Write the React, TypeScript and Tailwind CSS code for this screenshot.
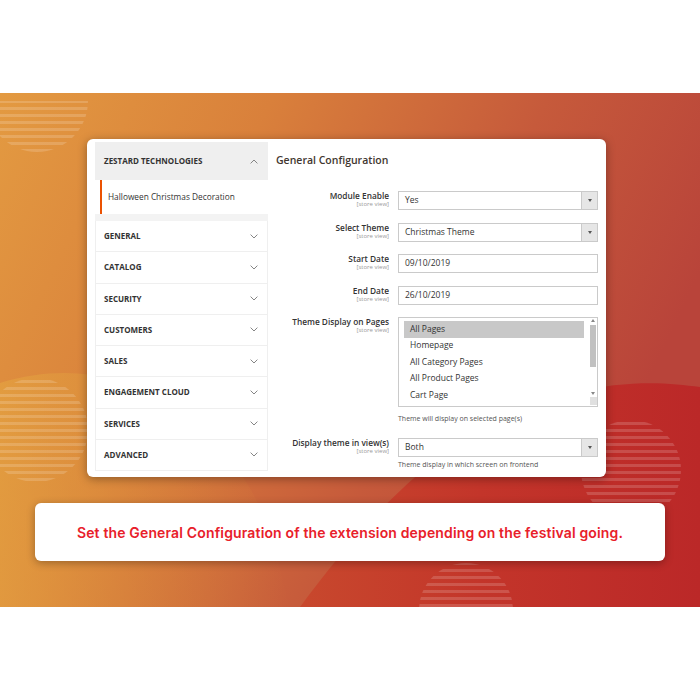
import React from 'react';

const sections = ['GENERAL', 'CATALOG', 'SECURITY', 'CUSTOMERS', 'SALES', 'ENGAGEMENT CLOUD', 'SERVICES', 'ADVANCED'];
const pages = ['All Pages', 'Homepage', 'All Category Pages', 'All Product Pages', 'Cart Page'];

const Chevron = ({ up = false }: { up?: boolean }) => (
  <svg width="8" height="5" viewBox="0 0 8 5" className="text-[#777]">
    <path d={up ? 'M0.6 4.4 L4 1 L7.4 4.4' : 'M0.6 0.6 L4 4 L7.4 0.6'} fill="none" stroke="currentColor" strokeWidth="0.9" />
  </svg>
);

const Label = ({ text }: { text: string }) => (
  <div className="w-[113px] shrink-0 pt-[1px] text-right leading-none">
    <div className="text-[8.3px] font-semibold text-[#333]">{text}</div>
    <div className="mt-[1px] text-[6px] text-[#9a9a9a]">[store view]</div>
  </div>
);

const SelectField = ({ value }: { value: string }) => (
  <div className="flex h-[19px] w-[200px] border border-[#cacaca] bg-white">
    <div className="flex flex-1 items-center pl-[6px] text-[8.5px] text-[#333]">{value}</div>
    <div className="flex w-[16px] items-center justify-center border-l border-[#cacaca] bg-[#e6e6e6]">
      <svg width="4" height="3" viewBox="0 0 4 3">
        <path d="M0 0 H4 L2 3 Z" fill="#555" />
      </svg>
    </div>
  </div>
);

const TextField = ({ value }: { value: string }) => (
  <div className="flex h-[19px] w-[200px] items-center border border-[#cacaca] bg-white pl-[6px] text-[8.5px] text-[#333]">
    {value}
  </div>
);

const Background = () => (
  <svg className="absolute inset-0" width="700" height="514" viewBox="0 0 700 514">
    <defs>
      <linearGradient id="base" x1="0" y1="0" x2="1" y2="0.35">
        <stop offset="0" stopColor="#e39a41" />
        <stop offset="0.35" stopColor="#d9803b" />
        <stop offset="0.7" stopColor="#c65a3b" />
        <stop offset="1" stopColor="#b9443a" />
      </linearGradient>
      <linearGradient id="red" x1="0" y1="0" x2="1" y2="0">
        <stop offset="0" stopColor="#c8482d" />
        <stop offset="0.45" stopColor="#c3352a" />
        <stop offset="1" stopColor="#bb2828" />
      </linearGradient>
      <linearGradient id="warm" x1="0" y1="0" x2="1" y2="0">
        <stop offset="0" stopColor="#e4a240" />
        <stop offset="1" stopColor="#d98a3a" stopOpacity="0" />
      </linearGradient>
      <pattern id="stripes" width="10" height="7" patternUnits="userSpaceOnUse">
        <rect width="10" height="3" fill="#ffffff" fillOpacity="0.16" />
      </pattern>
    </defs>
    <rect width="700" height="514" fill="url(#base)" />
    <path d="M0 290 C100 260 180 300 240 380 C270 420 280 480 290 514 L0 514 Z" fill="url(#warm)" opacity="0.7" />
    <path d="M300 514 C370 420 450 330 570 300 C630 286 670 290 700 294 L700 514 Z" fill="url(#red)" />
    <path d="M0 8 H88 A51 51 0 0 1 -14 8 Z" fill="url(#stripes)" />
    <circle cx="36" cy="337" r="52" fill="url(#stripes)" />
    <circle cx="631" cy="377" r="50" fill="url(#stripes)" />
    <circle cx="466" cy="517" r="47" fill="url(#stripes)" />
  </svg>
);

export default function App() {
  return (
    <div className="flex h-[700px] w-[700px] flex-col bg-white [font-family:'Open_Sans',sans-serif]">
      <div className="h-[93px]" />
      <div className="relative h-[514px] overflow-hidden">
        <Background />
        <div className="relative flex flex-col pt-[46px]">
          <div className="ml-[87px] flex h-[338px] w-[519px] rounded-md bg-white shadow-[0_2px_10px_rgba(0,0,0,0.35)]">
            <div className="ml-[8px] mt-[3px] flex w-[173px] flex-col">
              <div className="flex h-[38px] items-center justify-between bg-[#efefef] pl-[9px] pr-[10px]">
                <span className="text-[8px] font-bold text-[#333]">ZESTARD TECHNOLOGIES</span>
                <Chevron up />
              </div>
              <div className="flex h-[34px] bg-white pl-[5px]">
                <div className="flex flex-1 items-center border-l-2 border-[#eb5202] pl-[6px] text-[8.3px] text-[#333]">
                  Halloween Christmas Decoration
                </div>
              </div>
              <div className="h-[7px] bg-[#f3f3f3]" />
              {sections.map((s) => (
                <div
                  key={s}
                  className="flex h-[31.25px] items-center justify-between border-x border-b border-[#efefef] pl-[8px] pr-[9px]"
                >
                  <span className="text-[8px] font-bold text-[#333]">{s}</span>
                  <Chevron />
                </div>
              ))}
            </div>
            <div className="ml-[8px] flex flex-col pt-[14px]">
              <div className="text-[10.5px] font-semibold leading-[14px] text-[#41362f]">General Configuration</div>
              <div className="mt-[24px] flex flex-col gap-[12.5px]">
                <div className="flex gap-[9px]">
                  <Label text="Module Enable" />
                  <SelectField value="Yes" />
                </div>
                <div className="flex gap-[9px]">
                  <Label text="Select Theme" />
                  <SelectField value="Christmas Theme" />
                </div>
                <div className="flex gap-[9px]">
                  <Label text="Start Date" />
                  <TextField value="09/10/2019" />
                </div>
                <div className="flex gap-[9px]">
                  <Label text="End Date" />
                  <TextField value="26/10/2019" />
                </div>
                <div className="flex gap-[9px]">
                  <Label text="Theme Display on Pages" />
                  <div className="flex flex-col">
                    <div className="flex h-[90px] w-[200px] border border-[#cacaca] bg-white">
                      <div className="flex flex-1 flex-col pl-[5px] pt-[3px]">
                        {pages.map((p, i) => (
                          <div
                            key={p}
                            className={`flex h-[16.5px] items-center pl-[6px] text-[8.5px] text-[#333] ${i === 0 ? 'bg-[#c8c8c8]' : ''}`}
                          >
                            {p}
                          </div>
                        ))}
                      </div>
                      <div className="ml-[5px] flex w-[8px] flex-col items-center py-[1px]">
                        <svg width="4" height="3" viewBox="0 0 4 3">
                          <path d="M2 0 L4 3 H0 Z" fill="#888" />
                        </svg>
                        <div className="mt-[3px] h-[42px] w-[6px] bg-[#c1c1c1]" />
                        <div className="flex-1" />
                        <svg width="4" height="3" viewBox="0 0 4 3">
                          <path d="M0 0 H4 L2 3 Z" fill="#888" />
                        </svg>
                        <div className="mt-[2px] h-[8px] w-[7px] bg-[#e0e0e0]" />
                      </div>
                    </div>
                    <div className="mt-[7px] text-[7px] text-[#555]">Theme will display on selected page(s)</div>
                  </div>
                </div>
                <div className="mt-[1px] flex gap-[9px]">
                  <Label text="Display theme in view(s)" />
                  <div className="flex flex-col">
                    <SelectField value="Both" />
                    <div className="mt-[3px] text-[7px] text-[#555]">Theme display in which screen on frontend</div>
                  </div>
                </div>
              </div>
            </div>
          </div>
          <div className="mx-[35px] mt-[26px] flex h-[58px] items-center justify-center rounded-md bg-white shadow-[0_2px_8px_rgba(0,0,0,0.3)]">
            <span className="text-[14px] font-semibold tracking-[0.15px] text-[#e8202a] [font-family:Inter,sans-serif]">
              Set the General Configuration of the extension depending on the festival going.
            </span>
          </div>
        </div>
      </div>
      <div className="h-[93px]" />
    </div>
  );
}
